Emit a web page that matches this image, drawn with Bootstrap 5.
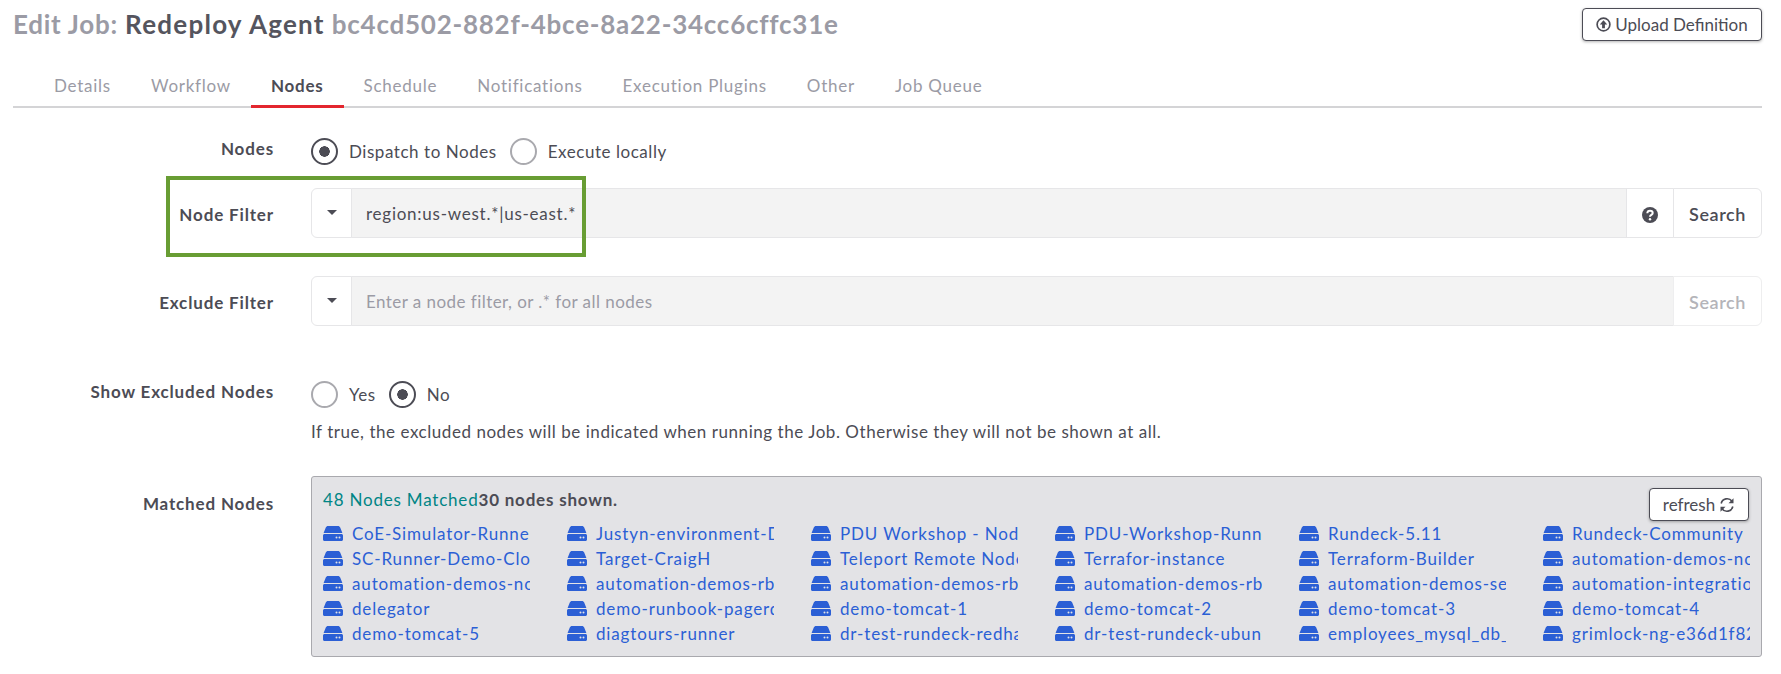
<!DOCTYPE html>
<html lang="en">
<head>
  <meta charset="UTF-8">
  <title>Edit Job</title>
  <link href="https://cdn.jsdelivr.net/npm/bootstrap@5.3.2/dist/css/bootstrap.min.css" rel="stylesheet">
  <style>
    body {
      background: #fff;
      color: #4c4c55;
      font-family: "Lato", sans-serif;
      font-size: 17px;
      letter-spacing: .55px;
      overflow: hidden;
    }
    .job-page { position: relative; padding: 8px 19px 0 13px; }
    .job-head { height: 33px; }
    .job-title { font-size: 26px; font-weight: 700; margin: 0; color: #9b9ba5; line-height: 33px; letter-spacing: .75px; }
    .job-title span { color: #55555e; letter-spacing: 1.25px; }
    .btn-plain {
      background: #fff; border: 1px solid #4c4c55; border-radius: 4px; color: #4c4c55;
      box-shadow: 0 1px 3px rgba(0,0,0,.3); font-size: 17px; line-height: 1; padding: 0;
      display: flex; align-items: center; justify-content: center; gap: 4px;
    }
    .btn-upload { width: 180px; height: 33px; }
    .btn-refresh { width: 100px; height: 33px; position: absolute; top: 11px; right: 12px; }
    .job-tabs { margin-top: 24px; border-bottom: 2px solid #d4d4d6; height: 43px; padding-left: 21px; letter-spacing: .75px; }
    .job-tabs .nav-link { color: #9b9ba5; padding: 9px 20px 0; height: 43px; border-bottom: 3px solid transparent; line-height: 24px; }
    .job-tabs .nav-link.active { color: #4c4c55; font-weight: 700; border-bottom-color: #e3262e; }
    .form-line { display: flex; }
    .form-name { width: 261px; margin-right: 37px; text-align: right; font-weight: 700; flex: none; letter-spacing: .85px; }
    .name-raised { margin-top: -2px; }
    .name-lowered { padding-top: 3px; }
    .form-body { flex: 1; min-width: 0; }
    .radio-set { display: flex; align-items: center; }
    .radio-pick {
      appearance: none; width: 27px; height: 27px; border-radius: 50%; margin: 0 11px 0 0;
      border: 2px solid #a9a9ae; background: #fff; flex: none;
    }
    .radio-pick:checked { border-color: #4c4c55; background: radial-gradient(circle, #4c4c55 0 5px, #fff 5.5px); }
    .radio-text { margin-right: 13px; }
    .filter-group { height: 50px; flex-wrap: nowrap; }
    .filter-group .btn, .filter-group .form-control { font-size: 17px; color: #4c4c55; border-color: #e6e6e8; background: #fff; letter-spacing: .75px; }
    .filter-group .form-control { background: #f3f3f3; border-color: #e6e6e8; box-shadow: none; padding: 2px 0 0 14px; }
    .filter-group .form-control::placeholder { color: #9b9ba5; opacity: 1; letter-spacing: .45px; }
    .filter-group .caret-btn { width: 41px; padding: 0; }
    .filter-group .help-btn { width: 48px; padding: 0; }
    .filter-group .find-btn { width: 89px; padding: 2px 0 0; font-weight: 600; font-size: 18px; letter-spacing: .55px; }
    .filter-group .find-btn:disabled { color: #b4b4b9; opacity: 1; font-weight: 600; border-color: #eeeeef; }
    .match-box {
      position: relative; height: 181px; background: #e3e3e6; border: 1px solid #a9a9ae;
      border-radius: 3px; padding: 11px 11px;
    }
    .match-head { font-weight: 700; line-height: 24px; height: 33px; letter-spacing: .8px; }
    .match-count { color: #008585; font-weight: 400; }
    .node-grid { display: grid; grid-template-columns: repeat(6, 207px); column-gap: 37px; grid-auto-rows: 25px; }
    .node-item { display: flex; align-items: center; gap: 9px; overflow: hidden; white-space: nowrap; color: #2b5fd5; text-decoration: none; line-height: 25px; letter-spacing: .85px; }
    .node-item svg { flex: none; }
    .note-box { position: absolute; left: 166px; top: 176px; width: 420px; height: 81px; border: 4px solid #689d33; pointer-events: none; }
  </style>
</head>
<body>
<svg width="0" height="0" class="position-absolute">
  <symbol id="hdd" viewBox="0 0 20 15">
    <path fill="#2b5fd5" d="M5 0h10c1 0 1.8.6 2.2 1.5L19.4 7H.6l2.2-5.5C3.200.6 4 0 5 0zM1.500 8h17c.8 0 1.500.7 1.500 1.500v4c0 .8-.7 1.500-1.500 1.500h-17C.7 15 0 14.300 0 13.500v-4C0 8.700.7 8 1.500 8z"/>
    <circle cx="13.500" cy="11.500" r="1" fill="#e3e3e6"/><circle cx="16.500" cy="11.500" r="1" fill="#e3e3e6"/>
  </symbol>
</svg>
<div class="job-page">
  <div class="job-head d-flex justify-content-between">
    <h1 class="job-title">Edit Job: <span>Redeploy Agent</span> bc4cd502-882f-4bce-8a22-34cc6cffc31e</h1>
    <button class="btn-plain btn-upload" type="button">
      <svg width="15" height="15" viewBox="0 0 16 16"><circle cx="8" cy="8" r="6.800" fill="none" stroke="#4c4c55" stroke-width="1.800"/><path fill="#4c4c55" d="M8 3.500 12 8H9.500v4h-3V8H4z"/></svg>
      Upload Definition
    </button>
  </div>
  <ul class="nav job-tabs">
    <li class="nav-item"><a class="nav-link" href="#">Details</a></li>
    <li class="nav-item"><a class="nav-link" href="#">Workflow</a></li>
    <li class="nav-item"><a class="nav-link active" href="#">Nodes</a></li>
    <li class="nav-item"><a class="nav-link" href="#">Schedule</a></li>
    <li class="nav-item"><a class="nav-link" href="#">Notifications</a></li>
    <li class="nav-item"><a class="nav-link" href="#">Execution Plugins</a></li>
    <li class="nav-item"><a class="nav-link" href="#">Other</a></li>
    <li class="nav-item"><a class="nav-link" href="#">Job Queue</a></li>
  </ul>

  <div class="form-line" style="margin-top:30px">
    <div class="form-name name-raised">Nodes</div>
    <div class="form-body radio-set">
      <input class="radio-pick" type="radio" name="r1" checked><span class="radio-text">Dispatch to Nodes</span>
      <input class="radio-pick" type="radio" name="r1"><span class="radio-text">Execute locally</span>
    </div>
  </div>

  <div class="form-line align-items-center" style="margin-top:23px">
    <div class="form-name name-lowered">Node Filter</div>
    <div class="form-body input-group filter-group">
      <button class="btn dropdown-toggle caret-btn" type="button"></button>
      <input class="form-control" type="text" value="region:us-west.*|us-east.*">
      <button class="btn help-btn" type="button">
        <svg width="16" height="16" viewBox="0 0 16 16"><circle cx="8" cy="8" r="8" fill="#4c4c55"/><path fill="none" stroke="#fff" stroke-width="2" d="M5.300 6.200C5.400 4.600 6.500 3.800 8 3.800c1.600 0 2.700.9 2.700 2.200 0 1.900-2.700 1.800-2.700 3.700"/><circle cx="8" cy="12.200" r="1.200" fill="#fff"/></svg>
      </button>
      <button class="btn find-btn" type="button">Search</button>
    </div>
  </div>

  <div class="form-line align-items-center" style="margin-top:38px">
    <div class="form-name name-lowered">Exclude Filter</div>
    <div class="form-body input-group filter-group">
      <button class="btn dropdown-toggle caret-btn" type="button"></button>
      <input class="form-control" type="text" placeholder="Enter a node filter, or .* for all nodes">
      <button class="btn find-btn" type="button" disabled>Search</button>
    </div>
  </div>

  <div class="form-line" style="margin-top:55px">
    <div class="form-name name-raised">Show Excluded Nodes</div>
    <div class="form-body">
      <div class="radio-set">
        <input class="radio-pick" type="radio" name="r2"><span class="radio-text">Yes</span>
        <input class="radio-pick" type="radio" name="r2" checked><span class="radio-text">No</span>
      </div>
      <p class="mb-0" style="margin-top:12px;line-height:24px">If true, the excluded nodes will be indicated when running the Job. Otherwise they will not be shown at all.</p>
    </div>
  </div>

  <div class="form-line" style="margin-top:32px">
    <div class="form-name" style="padding-top:15px">Matched Nodes</div>
    <div class="form-body match-box">
      <button class="btn-plain btn-refresh" type="button">refresh
        <svg width="16" height="16" viewBox="0 0 16 16" fill="none" stroke="#4c4c55" stroke-width="1.600"><path d="M2.200 6.500A6 6 0 0 1 13 4.300"/><path fill="#4c4c55" stroke="none" d="M14.500 1.200v5h-5z"/><path d="M13.800 9.500A6 6 0 0 1 3 11.700"/><path fill="#4c4c55" stroke="none" d="M1.500 14.800v-5h5z"/></svg>
      </button>
      <div class="match-head"><span class="match-count">48 Nodes Matched</span>30 nodes shown.</div>
      <div class="node-grid">
        <a class="node-item" href="#"><svg width="20" height="15"><use href="#hdd"/></svg>CoE-Simulator-Runner</a>
        <a class="node-item" href="#"><svg width="20" height="15"><use href="#hdd"/></svg>Justyn-environment-Demo</a>
        <a class="node-item" href="#"><svg width="20" height="15"><use href="#hdd"/></svg>PDU Workshop - Node</a>
        <a class="node-item" href="#"><svg width="20" height="15"><use href="#hdd"/></svg>PDU-Workshop-Runner</a>
        <a class="node-item" href="#"><svg width="20" height="15"><use href="#hdd"/></svg>Rundeck-5.11</a>
        <a class="node-item" href="#"><svg width="20" height="15"><use href="#hdd"/></svg>Rundeck-Community</a>
        <a class="node-item" href="#"><svg width="20" height="15"><use href="#hdd"/></svg>SC-Runner-Demo-Cloud</a>
        <a class="node-item" href="#"><svg width="20" height="15"><use href="#hdd"/></svg>Target-CraigH</a>
        <a class="node-item" href="#"><svg width="20" height="15"><use href="#hdd"/></svg>Teleport Remote Node</a>
        <a class="node-item" href="#"><svg width="20" height="15"><use href="#hdd"/></svg>Terrafor-instance</a>
        <a class="node-item" href="#"><svg width="20" height="15"><use href="#hdd"/></svg>Terraform-Builder</a>
        <a class="node-item" href="#"><svg width="20" height="15"><use href="#hdd"/></svg>automation-demos-node</a>
        <a class="node-item" href="#"><svg width="20" height="15"><use href="#hdd"/></svg>automation-demos-node</a>
        <a class="node-item" href="#"><svg width="20" height="15"><use href="#hdd"/></svg>automation-demos-rba</a>
        <a class="node-item" href="#"><svg width="20" height="15"><use href="#hdd"/></svg>automation-demos-rba</a>
        <a class="node-item" href="#"><svg width="20" height="15"><use href="#hdd"/></svg>automation-demos-rba</a>
        <a class="node-item" href="#"><svg width="20" height="15"><use href="#hdd"/></svg>automation-demos-server</a>
        <a class="node-item" href="#"><svg width="20" height="15"><use href="#hdd"/></svg>automation-integration</a>
        <a class="node-item" href="#"><svg width="20" height="15"><use href="#hdd"/></svg>delegator</a>
        <a class="node-item" href="#"><svg width="20" height="15"><use href="#hdd"/></svg>demo-runbook-pagerduty</a>
        <a class="node-item" href="#"><svg width="20" height="15"><use href="#hdd"/></svg>demo-tomcat-1</a>
        <a class="node-item" href="#"><svg width="20" height="15"><use href="#hdd"/></svg>demo-tomcat-2</a>
        <a class="node-item" href="#"><svg width="20" height="15"><use href="#hdd"/></svg>demo-tomcat-3</a>
        <a class="node-item" href="#"><svg width="20" height="15"><use href="#hdd"/></svg>demo-tomcat-4</a>
        <a class="node-item" href="#"><svg width="20" height="15"><use href="#hdd"/></svg>demo-tomcat-5</a>
        <a class="node-item" href="#"><svg width="20" height="15"><use href="#hdd"/></svg>diagtours-runner</a>
        <a class="node-item" href="#"><svg width="20" height="15"><use href="#hdd"/></svg>dr-test-rundeck-redhat</a>
        <a class="node-item" href="#"><svg width="20" height="15"><use href="#hdd"/></svg>dr-test-rundeck-ubuntu</a>
        <a class="node-item" href="#"><svg width="20" height="15"><use href="#hdd"/></svg>employees_mysql_db_node</a>
        <a class="node-item" href="#"><svg width="20" height="15"><use href="#hdd"/></svg>grimlock-ng-e36d1f82a1</a>
      </div>
    </div>
  </div>
  <div class="note-box"></div>
</div>
<script src="https://cdn.jsdelivr.net/npm/bootstrap@5.3.2/dist/js/bootstrap.bundle.min.js"></script>
</body>
</html>
